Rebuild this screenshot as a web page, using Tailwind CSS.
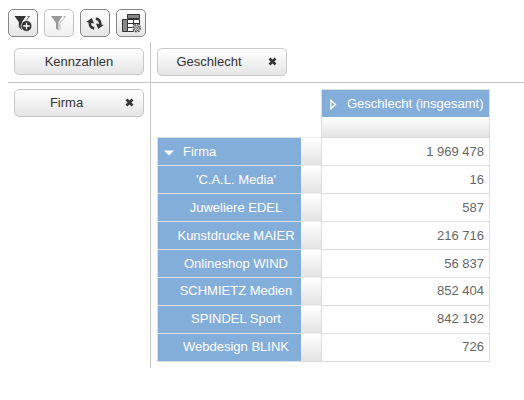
<!DOCTYPE html>
<html lang="de">
<head>
<meta charset="utf-8">
<title>Pivot</title>
<script src="https://cdn.jsdelivr.net/npm/@tailwindcss/browser@4"></script>
</head>
<body class="w-[524px] h-[400px] overflow-hidden bg-white font-['Liberation_Sans',Arial,sans-serif] text-[13px] leading-[18px] text-[#333]">
<div class="flex flex-col pl-2 pt-[9px]">
  <div class="flex gap-[6px] h-[33px]">
    <button class="w-[30px] h-7 rounded-[5px] border border-[#858585] bg-linear-to-b from-white to-[#e5e5e5] flex items-center justify-center">
      <svg class="w-7 h-[26px] shrink-0" viewBox="0 0 28 26"><path d="M5.5 6H17L13 12V20L9.8 17V12Z" fill="#333"/><path d="M18.5 6.5H20.5L15 13" fill="none" stroke="#666"/><circle cx="17.5" cy="16" r="5.4" fill="#333" stroke="#f4f4f4" stroke-width=".7"/><path d="M14.2 16H20.8M17.5 12.7V19.3" stroke="#fff" stroke-width="1.3"/></svg>
    </button>
    <button class="w-[30px] h-7 rounded-[5px] border border-[#c2c2c2] bg-linear-to-b from-white to-[#f0f0f0] flex items-center justify-center">
      <svg class="w-7 h-[26px] shrink-0" viewBox="0 0 28 26"><path d="M6 6H17.3L13.5 12V20.5L11 18.5V13Z" fill="#999"/><path d="M18.5 6.5H20.5L15 13V20" fill="none" stroke="#bbb"/></svg>
    </button>
    <button class="w-[30px] h-7 rounded-[5px] border border-[#858585] bg-linear-to-b from-white to-[#e5e5e5] flex items-center justify-center">
      <svg class="w-7 h-[26px] shrink-0" viewBox="0 0 28 26"><path d="M9 11.5C8.2 15.5 9.8 17.9 13.2 18.4M19 15.5C19.8 11.5 18.2 9.1 14.8 8.6" fill="none" stroke="#333" stroke-width="2.6"/><path d="M5.2 12L10.8 8L13 13.4Z M22.8 15L17.2 19L15 13.6Z" fill="#333"/></svg>
    </button>
    <button class="w-[30px] h-7 rounded-[5px] border border-[#858585] bg-linear-to-b from-white to-[#e5e5e5] flex items-center justify-center">
      <svg class="w-7 h-[26px] shrink-0" viewBox="0 0 28 26"><path d="M5.5 9.5H10.5V21.5H5.5Z M10.5 4.5H22.5V8.5H10.5Z" fill="#888" stroke="#333"/><path d="M10.5 9.5H22.5V21.5H10.5Z" fill="#fff" stroke="#333"/><path d="M16.5 9.5V21.5M10.5 13.5H22.5M10.5 17.5H22.5" stroke="#333"/><circle cx="19.7" cy="18.2" r="4.2" fill="#eee"/><circle cx="19.7" cy="18.2" r="3.6" fill="none" stroke="#444" stroke-width="1.4" stroke-dasharray="1.5 1.33"/><circle cx="19.7" cy="18.2" r="2.6" fill="#eee" stroke="#555" stroke-width=".9"/><circle cx="19.7" cy="18.2" r="1" fill="#fff" stroke="#444" stroke-width=".8"/></svg>
    </button>
  </div>

  <div class="flex h-[41px] border-b border-[#c8c8c8]">
    <div class="w-[143px] border-r border-[#c8c8c8] pl-[6px] pt-[6px]">
      <div class="w-[130px] h-[27px] rounded-[5px] border border-[#c8c8c8] bg-linear-to-b from-white to-[#e5e5e5] flex items-center justify-center">Kennzahlen</div>
    </div>
    <div class="pl-[6px] pt-[6px]">
      <div class="w-[130px] h-7 rounded-[5px] border border-[#c8c8c8] bg-linear-to-b from-white to-[#e5e5e5] flex items-center">
        <span class="w-[102px] text-center">Geschlecht</span>
        <svg class="ml-[8px] w-[9px] h-[9px] -mt-px" viewBox="0 0 9 9"><path d="M1.5 1.5L7.5 7.5M7.5 1.5L1.5 7.5" stroke="#333" stroke-width="2.6"/></svg>
      </div>
    </div>
  </div>

  <div class="flex h-[285px]">
    <div class="w-[143px] border-r border-[#c8c8c8] pl-[6px] pt-[6px]">
      <div class="w-[130px] h-7 rounded-[5px] border border-[#c8c8c8] bg-linear-to-b from-white to-[#e5e5e5] flex items-center">
        <span class="w-[103px] text-center">Firma</span>
        <svg class="ml-[7px] w-[9px] h-[9px] -mt-px" viewBox="0 0 9 9"><path d="M1.5 1.5L7.5 7.5M7.5 1.5L1.5 7.5" stroke="#333" stroke-width="2.6"/></svg>
      </div>
    </div>
    <div class="pl-[6px] pt-[6px]">
      <div class="w-[169px] ml-[164px] h-12 border-t border-[#ddd]">
        <div class="h-[27px] border-x border-[#ddd] bg-[#84aeda] text-white flex items-center">
          <svg class="ml-2 mr-[9px] w-2 h-3 shrink-0" viewBox="0 0 8 12"><path d="M.8 2.2V10.8L5.5 6.5Z" fill="none" stroke="#fff" stroke-width="1.3"/></svg>
          <span class="whitespace-nowrap">Geschlecht (insgesamt)</span>
        </div>
        <div class="h-5 border-x border-[#ddd] bg-linear-to-b from-white to-[#e3e3e3]"></div>
      </div>
      <div id="rows" class="border-b border-[#ddd] w-[333px]"></div>
    </div>
  </div>
</div>
<template id="row">
  <div class="flex h-7">
    <div class="head w-[144px] border-t border-l border-[#ddd] bg-[#84aeda] text-white flex items-center whitespace-nowrap"></div>
    <div class="w-5 border-t border-[#eee] bg-linear-to-b from-white to-[#e3e3e3]"></div>
    <div class="value w-[169px] border-t border-x border-[#ddd] pr-[5px] text-right text-[#666]"></div>
  </div>
</template>
<template id="arrow"><svg class="ml-[6px] mr-[9px] w-[10px] h-[6px] mt-[3px]" viewBox="0 0 10 6"><path d="M0 .5H10L5 5.5Z" fill="#fff"/></svg></template>
<script>
const data = [["Firma","1 969 478"],["'C.A.L. Media'","16"],["Juweliere EDEL","587"],["Kunstdrucke MAIER","216 716"],["Onlineshop WIND","56 837"],["SCHMIETZ Medien","852 404"],["SPINDEL Sport","842 192"],["Webdesign BLINK","726"]];
data.forEach(([name, value], i) => {
  const row = document.getElementById("row").content.cloneNode(true);
  const head = row.querySelector(".head");
  const cell = row.querySelector(".value");
  if (i === 0) head.append(document.getElementById("arrow").content.cloneNode(true));
  else head.classList.add("justify-center", "pl-[13px]");
  // The last three rows sit one pixel higher on their baseline.
  if (i > 4) head.classList.add("pb-[2px]");
  cell.classList.add(i > 4 ? "leading-[25px]" : "leading-[27px]");
  const label = document.createElement("span");
  label.textContent = name;
  head.append(label);
  cell.textContent = value;
  document.getElementById("rows").append(row);
});
</script>
</body>
</html>
